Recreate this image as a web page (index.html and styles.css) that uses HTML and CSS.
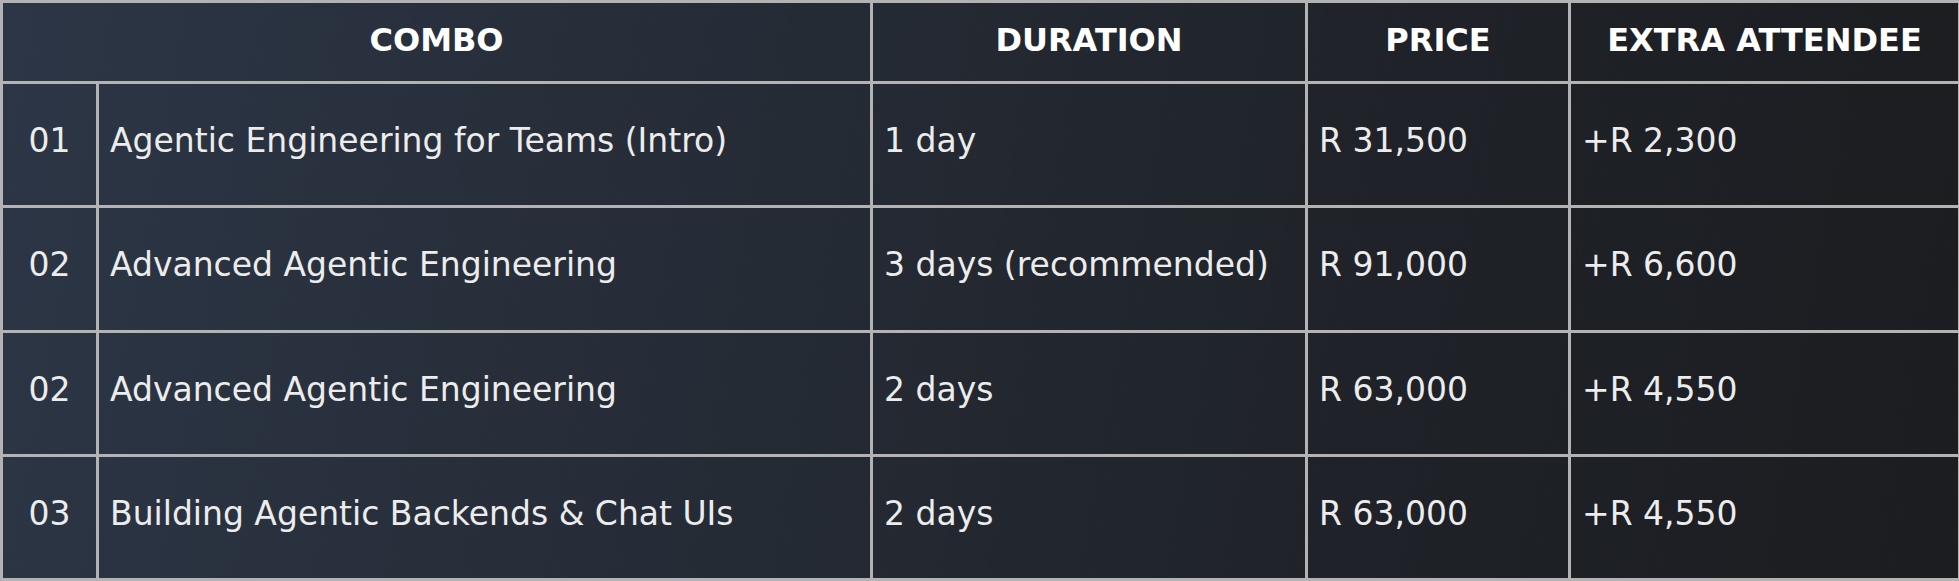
FILE: index.html
```html
<!DOCTYPE html>
<html lang="en">
<head>
<meta charset="utf-8">
<title>Combos</title>
<link rel="stylesheet" href="styles.css">
</head>
<body>
<div class="table">
  <div class="cell head span2">COMBO</div>
  <div class="cell head">DURATION</div>
  <div class="cell head">PRICE</div>
  <div class="cell head last">EXTRA ATTENDEE</div>

  <div class="cell num">01</div>
  <div class="cell">Agentic Engineering for Teams (Intro)</div>
  <div class="cell">1 day</div>
  <div class="cell">R 31,500</div>
  <div class="cell last">+R 2,300</div>

  <div class="cell num">02</div>
  <div class="cell">Advanced Agentic Engineering</div>
  <div class="cell">3 days (recommended)</div>
  <div class="cell">R 91,000</div>
  <div class="cell last">+R 6,600</div>

  <div class="cell num">02</div>
  <div class="cell">Advanced Agentic Engineering</div>
  <div class="cell">2 days</div>
  <div class="cell">R 63,000</div>
  <div class="cell last">+R 4,550</div>

  <div class="cell num">03</div>
  <div class="cell">Building Agentic Backends &amp; Chat UIs</div>
  <div class="cell">2 days</div>
  <div class="cell">R 63,000</div>
  <div class="cell last">+R 4,550</div>
</div>
</body>
</html>
```

FILE: styles.css
```css
html, body {
  margin: 0;
  padding: 0;
  background: #1c1e21;
}

.table {
  box-sizing: border-box;
  width: 1959px;
  height: 581px;
  display: grid;
  grid-template-columns: 96px 774px 435px 263px 391px;
  grid-template-rows: 81px repeat(4, 1fr);
  border-left: 3px solid #b3b3b3;
  border-top: 3px solid #b3b3b3;
  background: linear-gradient(100deg, #2c3646 0%, #252b35 40%, #1f2228 70%, #1b1d20 100%);
  font-family: "DejaVu Sans", "Liberation Sans", sans-serif;
  color: #ececec;
}

.cell {
  box-sizing: border-box;
  border-right: 3px solid #b3b3b3;
  border-bottom: 3px solid #b3b3b3;
  display: flex;
  align-items: center;
  padding: 0 0 7px 11px;
  font-size: 33px;
  line-height: 1.15;
  white-space: nowrap;
}

.last {
  border-right-width: 4px;
}

.head {
  justify-content: center;
  padding: 0 0 3px 0;
  font-size: 32px;
  font-weight: bold;
  color: #ffffff;
}

.span2 {
  grid-column: span 2;
}

.num {
  justify-content: center;
  padding-left: 0;
}
```
